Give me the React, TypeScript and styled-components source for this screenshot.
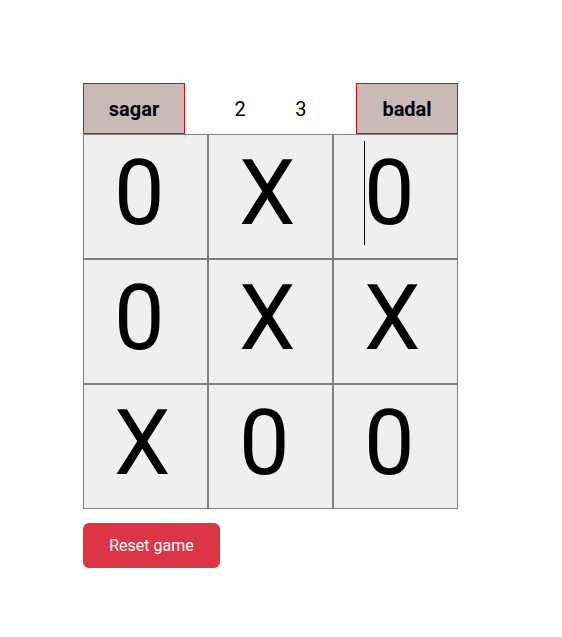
import React from 'react';
import styled, { createGlobalStyle } from 'styled-components';

const GlobalStyle = createGlobalStyle`
  body {
    margin: 8px;
    background: #ffffff;
    font-family: Roboto, "Liberation Sans", sans-serif;
  }
`;

const board: string[] = ['0', 'X', '0', '0', 'X', 'X', 'X', '0', '0'];

const App: React.FC = () => {
  return (
    <>
      <GlobalStyle />
      <Game>
        <Header>
          <Player>sagar</Player>
          <Score>2</Score>
          <Score>3</Score>
          <Player>badal</Player>
        </Header>
        <Board>
          {board.map((mark, i) => (
            <Cell key={i}>
              {i === 2 && <Caret />}
              {mark}
            </Cell>
          ))}
        </Board>
        <ResetButton type="button">Reset game</ResetButton>
      </Game>
    </>
  );
};

export default App;

const Game = styled.div`
  padding: 75px 0 0 75px;
  width: 375px;
`;

const Header = styled.div`
  display: flex;
  align-items: center;
  justify-content: space-between;
  width: 375px;
  height: 51px;
`;

const Player = styled.div`
  box-sizing: border-box;
  width: 102px;
  height: 51px;
  display: flex;
  align-items: center;
  justify-content: center;
  background: #c9b9b7;
  border: 1px solid #ff0000;
  font-size: 20px;
  font-weight: 700;
  color: #000;
`;

const Score = styled.span`
  font-size: 20px;
  color: #000;
`;

const Board = styled.div`
  display: grid;
  grid-template-columns: repeat(3, 125px);
  grid-auto-rows: 125px;
  width: 375px;
`;

const Cell = styled.div`
  box-sizing: border-box;
  background: #efefef;
  border: 1px solid #808080;
  padding: 6px 0 0 30px;
  font-size: 90px;
  line-height: normal;
  color: #000;
  white-space: nowrap;
`;

const Caret = styled.span`
  display: inline-block;
  width: 1px;
  height: 104px;
  margin-right: -1px;
  background: #000;
  vertical-align: top;
`;

const ResetButton = styled.button`
  margin-top: 14px;
  width: 137px;
  height: 45px;
  border: none;
  border-radius: 6px;
  background: #dc3545;
  color: #fff;
  font-family: Roboto, "Liberation Sans", sans-serif;
  font-size: 16px;
  cursor: pointer;
`;
